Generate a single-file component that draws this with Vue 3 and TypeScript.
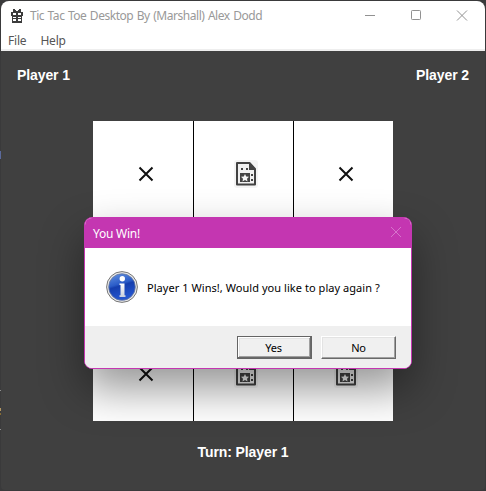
<script setup lang="ts">
type Mark = 'x' | 'o' | ''

const board: Mark[] = ['x', 'o', 'x', '', '', '', 'x', 'o', 'o']
const menu: string[] = ['File', 'Help']
</script>

<template>
  <div class="desktop">
    <main class="window">
      <header class="titlebar">
        <svg class="app-icon" viewBox="0 0 12 14" width="12" height="14" shape-rendering="crispEdges">
          <path fill="#3c3c3c" d="M2 0h2v1h1v1h2V1h1V0h2v3h2v4h-1v7H1V7H0V3h2z" />
          <path fill="#fff" d="M2 4h3v2H2zM7 4h3v2H7zM2 8h3v1H2zM7 8h3v1H7zM2 10h3v2H2zM7 10h3v2H7z" />
        </svg>
        <span class="title">Tic Tac Toe Desktop By (Marshall) Alex Dodd</span>
        <div class="controls">
          <svg viewBox="0 0 12 12" width="12" height="12"><path d="M1 5.500h10" /></svg>
          <svg viewBox="0 0 12 12" width="12" height="12"><rect x="1.5" y="0.5" width="9" height="9" rx="0.8" /></svg>
          <svg viewBox="0 0 12 12" width="12" height="12"><path d="M1 0.500l10 10M11 0.500l-10 10" /></svg>
        </div>
      </header>
      <nav class="menu">
        <span v-for="item in menu" :key="item">{{ item }}</span>
      </nav>
      <section class="game">
        <div class="players">
          <span>Player 1</span>
          <span>Player 2</span>
        </div>
        <div class="board">
          <div v-for="(mark, i) in board" :key="i" class="cell">
            <svg v-if="mark === 'x'" class="cross" viewBox="0 0 16 16" width="16" height="16">
              <path d="M1.500 1.500l13 13M14.500 1.500l-13 13" />
            </svg>
            <svg v-else-if="mark === 'o'" class="card" viewBox="0 0 24 28" width="24" height="28">
              <rect width="24" height="28" rx="3" fill="#f4f4f4" />
              <path d="M3 3h12.500l5.500 6v15.500H3z" fill="#f0f0f0" stroke="#424242" stroke-width="2" stroke-linejoin="round" />
              <path d="M15 3h1l5 6v1h-6z" fill="#424242" />
              <path d="M7 8h2v2H7zM12 8h2v2h-2zM17 14h2v2h-2zM17 19h2v2h-2zM6 13h10v9H6z" fill="#424242" />
              <path d="M11 14l1.200 2.400 2.800.4-2 1.900.5 2.700-2.500-1.300-2.500 1.300.5-2.700-2-1.900 2.800-.4z" fill="#f4f4f4" />
            </svg>
          </div>
        </div>
        <div class="turn">Turn: Player 1</div>
      </section>
    </main>

    <div class="dialog" role="dialog">
      <header class="dialog-title">
        <span>You Win!</span>
        <svg viewBox="0 0 12 12" width="12" height="12"><path d="M1 0l10 10M11 0L1 10" /></svg>
      </header>
      <div class="message">
        <svg viewBox="0 0 32 32" width="32" height="32">
          <defs>
            <linearGradient id="orb" x1="0" y1="0" x2="0.3" y2="1">
              <stop offset="0" stop-color="#6795e2" />
              <stop offset="0.46" stop-color="#2b5cc8" />
              <stop offset="0.54" stop-color="#153eae" />
              <stop offset="1" stop-color="#2455cf" />
            </linearGradient>
            <linearGradient id="stem" x1="0" y1="0" x2="0" y2="1">
              <stop offset="0" stop-color="#fff" />
              <stop offset="1" stop-color="#c9cfdc" />
            </linearGradient>
          </defs>
          <circle cx="16" cy="16" r="15.400" fill="#e8e8e8" stroke="#777" stroke-width="1" />
          <circle cx="16" cy="16" r="13.300" fill="url(#orb)" stroke="#6878a0" stroke-width="0.8" />
          <circle cx="16.300" cy="7.700" r="2.700" fill="#fff" />
          <path d="M13.500 12.500h5v11.800h1v1.700h-6v-1.700h1v-10.300h-1z" fill="url(#stem)" />
        </svg>
        <span>Player 1 Wins!, Would you like to play again ?</span>
      </div>
      <footer class="actions">
        <button class="button default">Yes</button>
        <button class="button">No</button>
      </footer>
    </div>
  </div>
</template>

<style>
body {
  margin: 0;
  background: #2b2b2c;
}
</style>

<style scoped>
.desktop {
  position: relative;
  box-sizing: border-box;
  width: 486px;
  height: 491px;
  padding: 1px;
  overflow: hidden;
  background:
    linear-gradient(#5b6a9c, #5b6a9c) 0 151px / 1px 8px no-repeat,
    linear-gradient(#909090, #909090) 0 390px / 1px 1px no-repeat,
    linear-gradient(#b59863, #b59863) 0 408px / 1px 3px no-repeat,
    linear-gradient(#856c35, #856c35) 0 413px / 1px 2px no-repeat,
    linear-gradient(#909090, #909090) 0 429px / 1px 1px no-repeat,
    #3a3a3b;
  font-family: "Noto Sans", "Open Sans", sans-serif;
}
.window {
  display: flex;
  flex-direction: column;
  height: 489px;
  border-radius: 8px 8px 4px 4px;
  overflow: hidden;
  background: #404040;
}
.titlebar {
  display: flex;
  align-items: center;
  height: 30px;
  padding: 0 17px 0 10px;
  background: #fff;
}
.title {
  margin-left: 7px;
  color: #999;
  font-size: 12px;
  line-height: 30px;
  white-space: nowrap;
  letter-spacing: -0.46px;
  word-spacing: 0.8px;
}
.controls {
  display: flex;
  gap: 34px;
  margin-left: auto;
}
.controls svg,
.dialog-title svg {
  fill: none;
  stroke: #919191;
  stroke-width: 1;
}
.menu {
  display: flex;
  gap: 14px;
  box-sizing: border-box;
  height: 20px;
  padding-left: 7px;
  border-bottom: 2px solid #eee;
  background: #fff;
  color: #555;
  font-size: 12px;
  line-height: 20px;
  letter-spacing: -0.2px;
}
.game {
  display: flex;
  flex-direction: column;
  align-items: center;
}
.players {
  display: flex;
  justify-content: space-between;
  box-sizing: border-box;
  width: 100%;
  height: 70px;
  padding: 15px 16px 0;
}
.players,
.turn {
  color: #fff;
  font-family: "Liberation Sans", Arial, sans-serif;
  font-size: 14px;
  font-weight: bold;
  line-height: 18px;
  letter-spacing: -0.1px;
}
.board {
  display: grid;
  grid-template-columns: repeat(3, 100px);
  grid-template-rows: repeat(3, 100px);
}
.cell {
  display: flex;
  align-items: center;
  justify-content: center;
  box-sizing: border-box;
  padding: 6px 0 0 5px;
  border-left: 1px solid #000;
  background: #fff;
}
.cell:nth-child(3n + 1) {
  border-left-color: #fff;
}
.cross {
  fill: none;
  stroke: #111;
  stroke-width: 2;
}
.turn {
  margin-top: 22px;
}
.dialog {
  position: absolute;
  top: 217px;
  left: 84px;
  display: flex;
  flex-direction: column;
  box-sizing: border-box;
  width: 328px;
  height: 152px;
  border: 1px solid #c436b1;
  border-radius: 8px;
  overflow: hidden;
  background: #fff;
  box-shadow: 0 20px 44px rgba(0, 0, 0, 0.42);
}
.dialog-title {
  display: flex;
  align-items: center;
  justify-content: space-between;
  height: 30px;
  padding: 0 9px 0 8px;
  background: #c436b1;
  color: #fff;
  font-size: 12px;
  letter-spacing: -0.25px;
}
.dialog-title svg {
  stroke: #d774cc;
}
.message {
  display: flex;
  align-items: center;
  gap: 9px;
  height: 78px;
  padding-left: 21px;
  color: #000;
  font-size: 11px;
  white-space: nowrap;
  letter-spacing: 0.05px;
}
.actions {
  display: flex;
  flex: 1;
  justify-content: flex-end;
  gap: 9px;
  padding: 10px 15px 0 0;
  background: #efefef;
}
.button {
  box-sizing: border-box;
  width: 75px;
  height: 23px;
  padding: 0;
  border: 1px solid;
  border-color: #fff #696969 #696969 #fff;
  background: #f0f0f0;
  box-shadow: inset -1px -1px #a0a0a0, inset 1px 1px #e3e3e3;
  color: #000;
  font-family: inherit;
  font-size: 11px;
  line-height: 20px;
  letter-spacing: -0.2px;
}
.button.default {
  padding-right: 2px;
  border-color: #646464;
  box-shadow: inset -1px -1px #696969, inset 1px 1px #fff, inset -2px -2px #a0a0a0, inset 2px 2px #e3e3e3;
}
</style>
